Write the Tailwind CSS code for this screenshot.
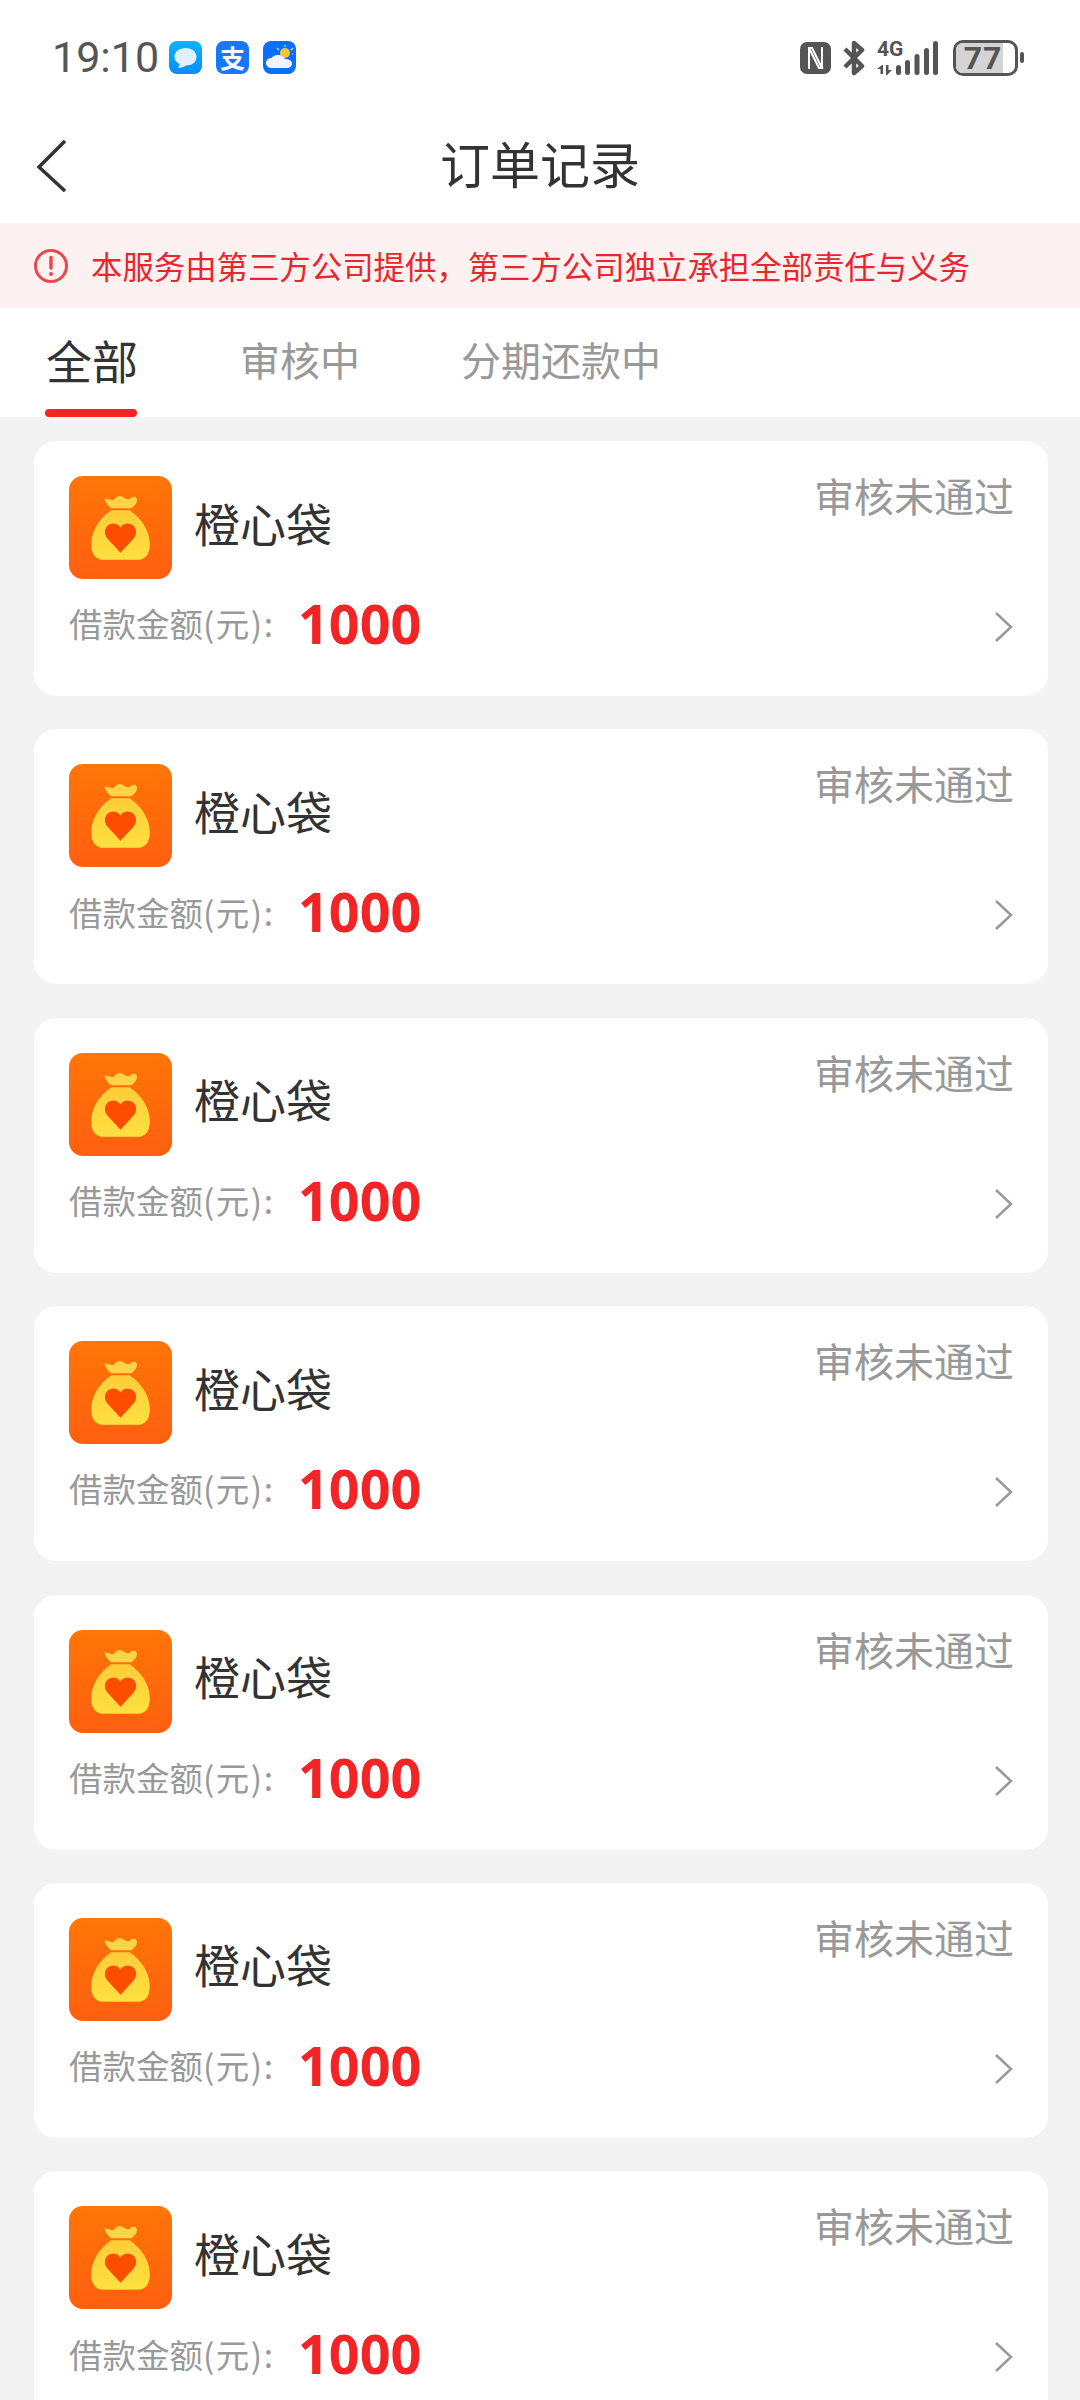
<!DOCTYPE html>
<html lang="zh-CN">
  <head>
    <meta charset="UTF-8" />
    <meta name="viewport" content="width=device-width, initial-scale=1.0" />
    <script src="https://cdn.jsdelivr.net/npm/@tailwindcss/browser@4"></script>
  </head>
  <body class="bg-[#f3f3f3] font-['Noto_Sans_CJK_SC','Noto_Sans',sans-serif]">
    <div class="w-[1080px] h-[2400px] overflow-hidden flex flex-col">
      <!-- status bar -->
      <div class="h-[112px] shrink-0 bg-white flex items-center justify-between pl-[52px] pr-[56px] pt-[3px]">
        <div class="flex items-center">
          <span class="text-[43px] leading-none text-[#555] font-['Roboto',sans-serif] w-[117px]">19:10</span>
          <div class="flex gap-[14px]">
            <div class="w-[33px] h-[33px] rounded-[8px] bg-gradient-to-b from-[#10b4ff] to-[#0a8cfa] flex items-center justify-center">
              <svg width="25" height="24" viewBox="0 0 25 24"><path d="M12.5 2C19 2 23.500 5.800 23.500 11C23.500 16 19 19.500 13 19.500C11 21 8 22 5 22C6 20.800 6.500 19.500 6.500 18C3.200 16.300 1.500 14 1.500 11C1.500 5.800 6 2 12.500 2Z" fill="#dff1fd"/></svg>
            </div>
            <div class="w-[33px] h-[33px] rounded-[8px] bg-[#1677ff] flex items-center justify-center">
              <span class="text-[25px] leading-none font-bold text-white">支</span>
            </div>
            <div class="w-[33px] h-[33px] rounded-[8px] bg-[#0b6ffb] flex items-center justify-center">
              <svg width="29" height="25" viewBox="0 0 29 25">
                <circle cx="20" cy="8" r="5" fill="#f7c531"/>
                <path d="M20 0V2M12 3L14 5M28 3L26 5M28 9H27" stroke="#cfe4fb" stroke-width="1.200"/>
                <path d="M7 23C3.500 23 1 21 1 18C1 15 3.500 13 6.500 13C8 10.500 11 9.500 14 10C17 10.500 19 12 20 14C24 14 27 15.500 27 18.500C27 21.500 24.500 23 22 23Z" fill="#f1f5f9"/>
              </svg>
            </div>
          </div>
        </div>
        <div class="flex items-center text-[#555]">
          <svg class="mr-[12px]" width="31" height="32" viewBox="0 0 31 32" fill="none">
            <rect width="31" height="32" rx="7" fill="#555"/>
            <path d="M9 27V6H12L22 26H19L9 6M22 26V5" stroke="#fff" stroke-width="2"/>
          </svg>
          <svg class="mr-[12px]" width="22" height="36" viewBox="0 0 22 36" fill="none">
            <path d="M2 9L19 26L11 33V3L19 10L2 27" stroke="#555" stroke-width="4.500" stroke-linejoin="round"/>
          </svg>
          <div class="relative w-[64px] h-[36px] mr-[12px]">
            <span class="absolute left-0 top-[-3px] text-[21px] leading-[24px] font-bold font-['Roboto',sans-serif]">4G</span>
            <svg class="absolute left-0 top-0" width="64" height="36" viewBox="0 0 64 36" fill="#555">
              <path d="M0 29L5 25H6V34H3.500V29ZM9 25H11.500V30L15 30L10 35H9Z"/>
              <rect x="19" y="25" width="5" height="10" rx="2.500"/>
              <rect x="28" y="20" width="5" height="15" rx="2.500"/>
              <rect x="37.500" y="14" width="5" height="21" rx="2.500"/>
              <rect x="47" y="8" width="5" height="27" rx="2.500"/>
              <rect x="56" y="1" width="5" height="34" rx="2.500"/>
            </svg>
          </div>
          <div class="relative w-[65px] h-[36px] rounded-[10px] border-[3px] border-[#555] overflow-hidden flex items-center justify-center">
            <div class="absolute left-0 top-0 bottom-0 w-[47px] bg-[#d4d4d4]"></div>
            <span class="relative text-[32px] leading-none font-bold font-['Roboto',sans-serif] tracking-[1px] mr-[5px]">77</span>
          </div>
          <div class="w-[4px] h-[11px] rounded-full bg-[#555] ml-[2px]"></div>
        </div>
      </div>

      <!-- nav bar -->
      <div class="relative h-[111px] bg-white flex items-center justify-center shrink-0">
        <svg class="absolute left-[36px] top-[26px]" width="32" height="54" viewBox="0 0 32 54" fill="none">
          <path d="M29 3L3 29L29 53" stroke="#333" stroke-width="3.500"/>
        </svg>
        <h1 class="text-[50px] leading-none text-[#333] -mt-[12px]">订单记录</h1>
      </div>

      <!-- notice -->
      <div class="h-[85px] bg-[#fef1f1] flex items-center pl-[33px] shrink-0">
        <svg width="36" height="36" viewBox="0 0 36 36" fill="none" class="mr-[22px]">
          <circle cx="18" cy="18" r="15.500" stroke="#e8484e" stroke-width="3"/>
          <path d="M18 9.500V20" stroke="#e8484e" stroke-width="3.500" stroke-linecap="round"/>
          <circle cx="18" cy="26" r="2" fill="#e8484e"/>
        </svg>
        <span class="text-[31.400px] leading-none text-[#e8262d] whitespace-nowrap">本服务由第三方公司提供，第三方公司独立承担全部责任与义务</span>
      </div>

      <!-- tabs -->
      <div class="relative h-[109px] bg-white flex items-start pt-[28px] pl-[46px] shrink-0">
        <div class="w-[194px] text-[46px] leading-[46px] text-[#333]">全部</div>
        <div class="w-[221px] text-[40px] leading-[46px] text-[#999]">审核中</div>
        <div class="text-[40px] leading-[46px] text-[#999]">分期还款中</div>
        <div class="absolute left-[45px] bottom-0 w-[92px] h-[8px] rounded-full bg-[#f22426]"></div>
      </div>

      <!-- orders -->
      <div id="orders" class="flex flex-col gap-[33.400px] pl-[34px] pr-[32px] pt-[24px]">
        <template id="orderCard">
          <div class="relative h-[255px] shrink-0 rounded-[22px] bg-white pt-[35px] pl-[35px] pr-[36px]">
            <div class="flex items-center">
              <svg width="103" height="103" viewBox="0 0 102 102" class="rounded-[14px] shrink-0">
                <defs>
                  <linearGradient id="iconBg" x1="0" y1="0" x2="0" y2="1">
                    <stop offset="0" stop-color="#ff7607"/>
                    <stop offset="1" stop-color="#ff5f10"/>
                  </linearGradient>
                  <linearGradient id="bagFill" x1="0" y1="0" x2="0" y2="1">
                    <stop offset="0" stop-color="#ffcd38"/>
                    <stop offset="1" stop-color="#ffe040"/>
                  </linearGradient>
                </defs>
                <rect width="102" height="102" fill="url(#iconBg)"/>
                <path d="M35 22L44 24Q48 19 52 20Q56 23 60 23Q64 18 67 22Q69 26 62 32H42Q37 29 35 22Z" fill="#fdd34a"/>
                <path d="M42 34H60C66 38 80 50 80 68C80 79 74 83 68 83H34C28 83 22 79 22 68C22 50 36 38 42 34Z" fill="url(#bagFill)"/>
                <path d="M51 76L38 62C33 56 36 47 44 47C47 47 50 49 51 51C52 49 55 47 58 47C66 47 69 56 64 62Z" fill="#ff4d00"/>
              </svg>
              <span class="ml-[22px] mb-[12px] text-[46px] leading-none text-[#333]">橙心袋</span>
            </div>
            <div class="flex items-center mt-[14px] h-[60px]">
              <span class="text-[33.500px] leading-none text-[#999]">借款金额<span class="tracking-[1.500px]">(元):</span></span>
              <span class="ml-[23.500px] text-[54px] leading-none font-bold text-[#f22426] font-['Open_Sans',sans-serif]">1000</span>
            </div>
            <span class="absolute right-[34px] top-[29px] text-[40px] leading-[50px] text-[#999]">审核未通过</span>
            <svg class="absolute right-[35.500px] top-[170px]" width="19" height="32" viewBox="0 0 19 32" fill="none">
              <path d="M2 2L17 16L2 30" stroke="#999" stroke-width="2.500"/>
            </svg>
          </div>
        </template>
      </div>
    </div>

    <script>
      const orders = document.getElementById("orders");
      const orderCard = document.getElementById("orderCard");
      for (let i = 0; i < 7; i++) {
        orders.appendChild(orderCard.content.cloneNode(true));
      }
    </script>
  </body>
</html>
